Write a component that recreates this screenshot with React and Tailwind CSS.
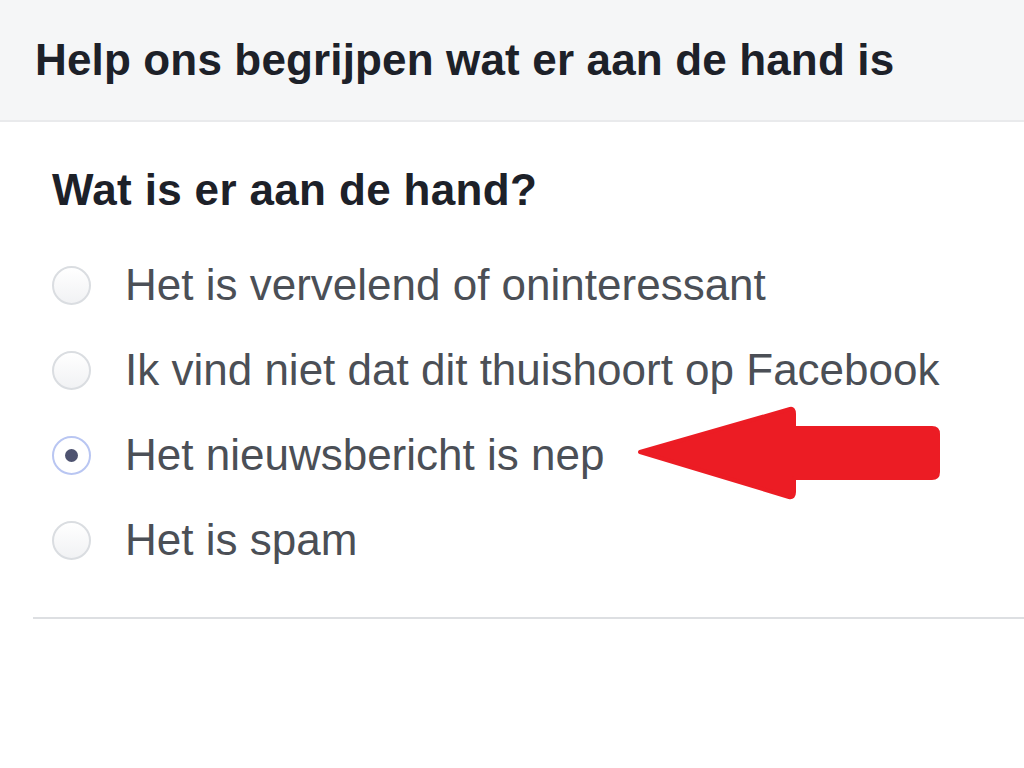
import React from "react";

const options = [
  "Het is vervelend of oninteressant",
  "Ik vind niet dat dit thuishoort op Facebook",
  "Het nieuwsbericht is nep",
  "Het is spam",
];

function Radio({ checked }) {
  if (checked) {
    return (
      <div className="w-[39px] h-[39px] rounded-full border-2 border-[#b9c6f2] bg-white flex items-center justify-center shrink-0">
        <div className="w-[13px] h-[13px] rounded-full bg-[#4e5370]" />
      </div>
    );
  }
  return (
    <div className="w-[39px] h-[39px] rounded-full border-2 border-[#dadde1] bg-gradient-to-b from-[#ffffff] to-[#f1f2f4] shrink-0" />
  );
}

export default function App() {
  return (
    <div
      className="relative w-[1024px] h-[768px] bg-white overflow-hidden"
      style={{ fontFamily: '"Liberation Sans", Arial, sans-serif' }}
    >
      <div className="h-[122px] bg-[#f5f6f7] border-b-2 border-[#e9eaec] flex items-center pl-[35px]">
        <h1 className="text-[44px] font-bold text-[#1d2129] tracking-[0.15px] leading-none">
          Help ons begrijpen wat er aan de hand is
        </h1>
      </div>
      <div className="pl-[52px] pt-[46px]">
        <h2 className="text-[44px] font-bold text-[#1d2129] tracking-[0.35px] leading-none">
          Wat is er aan de hand?
        </h2>
        <div className="mt-[53px] flex flex-col gap-[45px]">
          {options.map((o, i) => (
            <div key={o} className="flex items-center h-[40px]">
              <Radio checked={i === 2} />
              <span className="ml-[34px] text-[44px] text-[#4b4f56] leading-none">
                {o}
              </span>
            </div>
          ))}
        </div>
      </div>
      <div className="ml-[33px] mt-[57px] h-[2px] bg-[#dddfe2]" />
      <svg
        className="absolute left-[636px] top-[406px]"
        width="306"
        height="94"
        viewBox="0 0 306 94"
      >
        <path
          d="M4 46 L154 3 Q158 2 158 8 L158 22 L296 22 Q302 22 302 28 L302 66 Q302 72 296 72 L158 72 L158 86 Q158 92 153 91 Z"
          fill="#ec1c24"
          stroke="#ec1c24"
          strokeWidth="4"
          strokeLinejoin="round"
        />
      </svg>
    </div>
  );
}
